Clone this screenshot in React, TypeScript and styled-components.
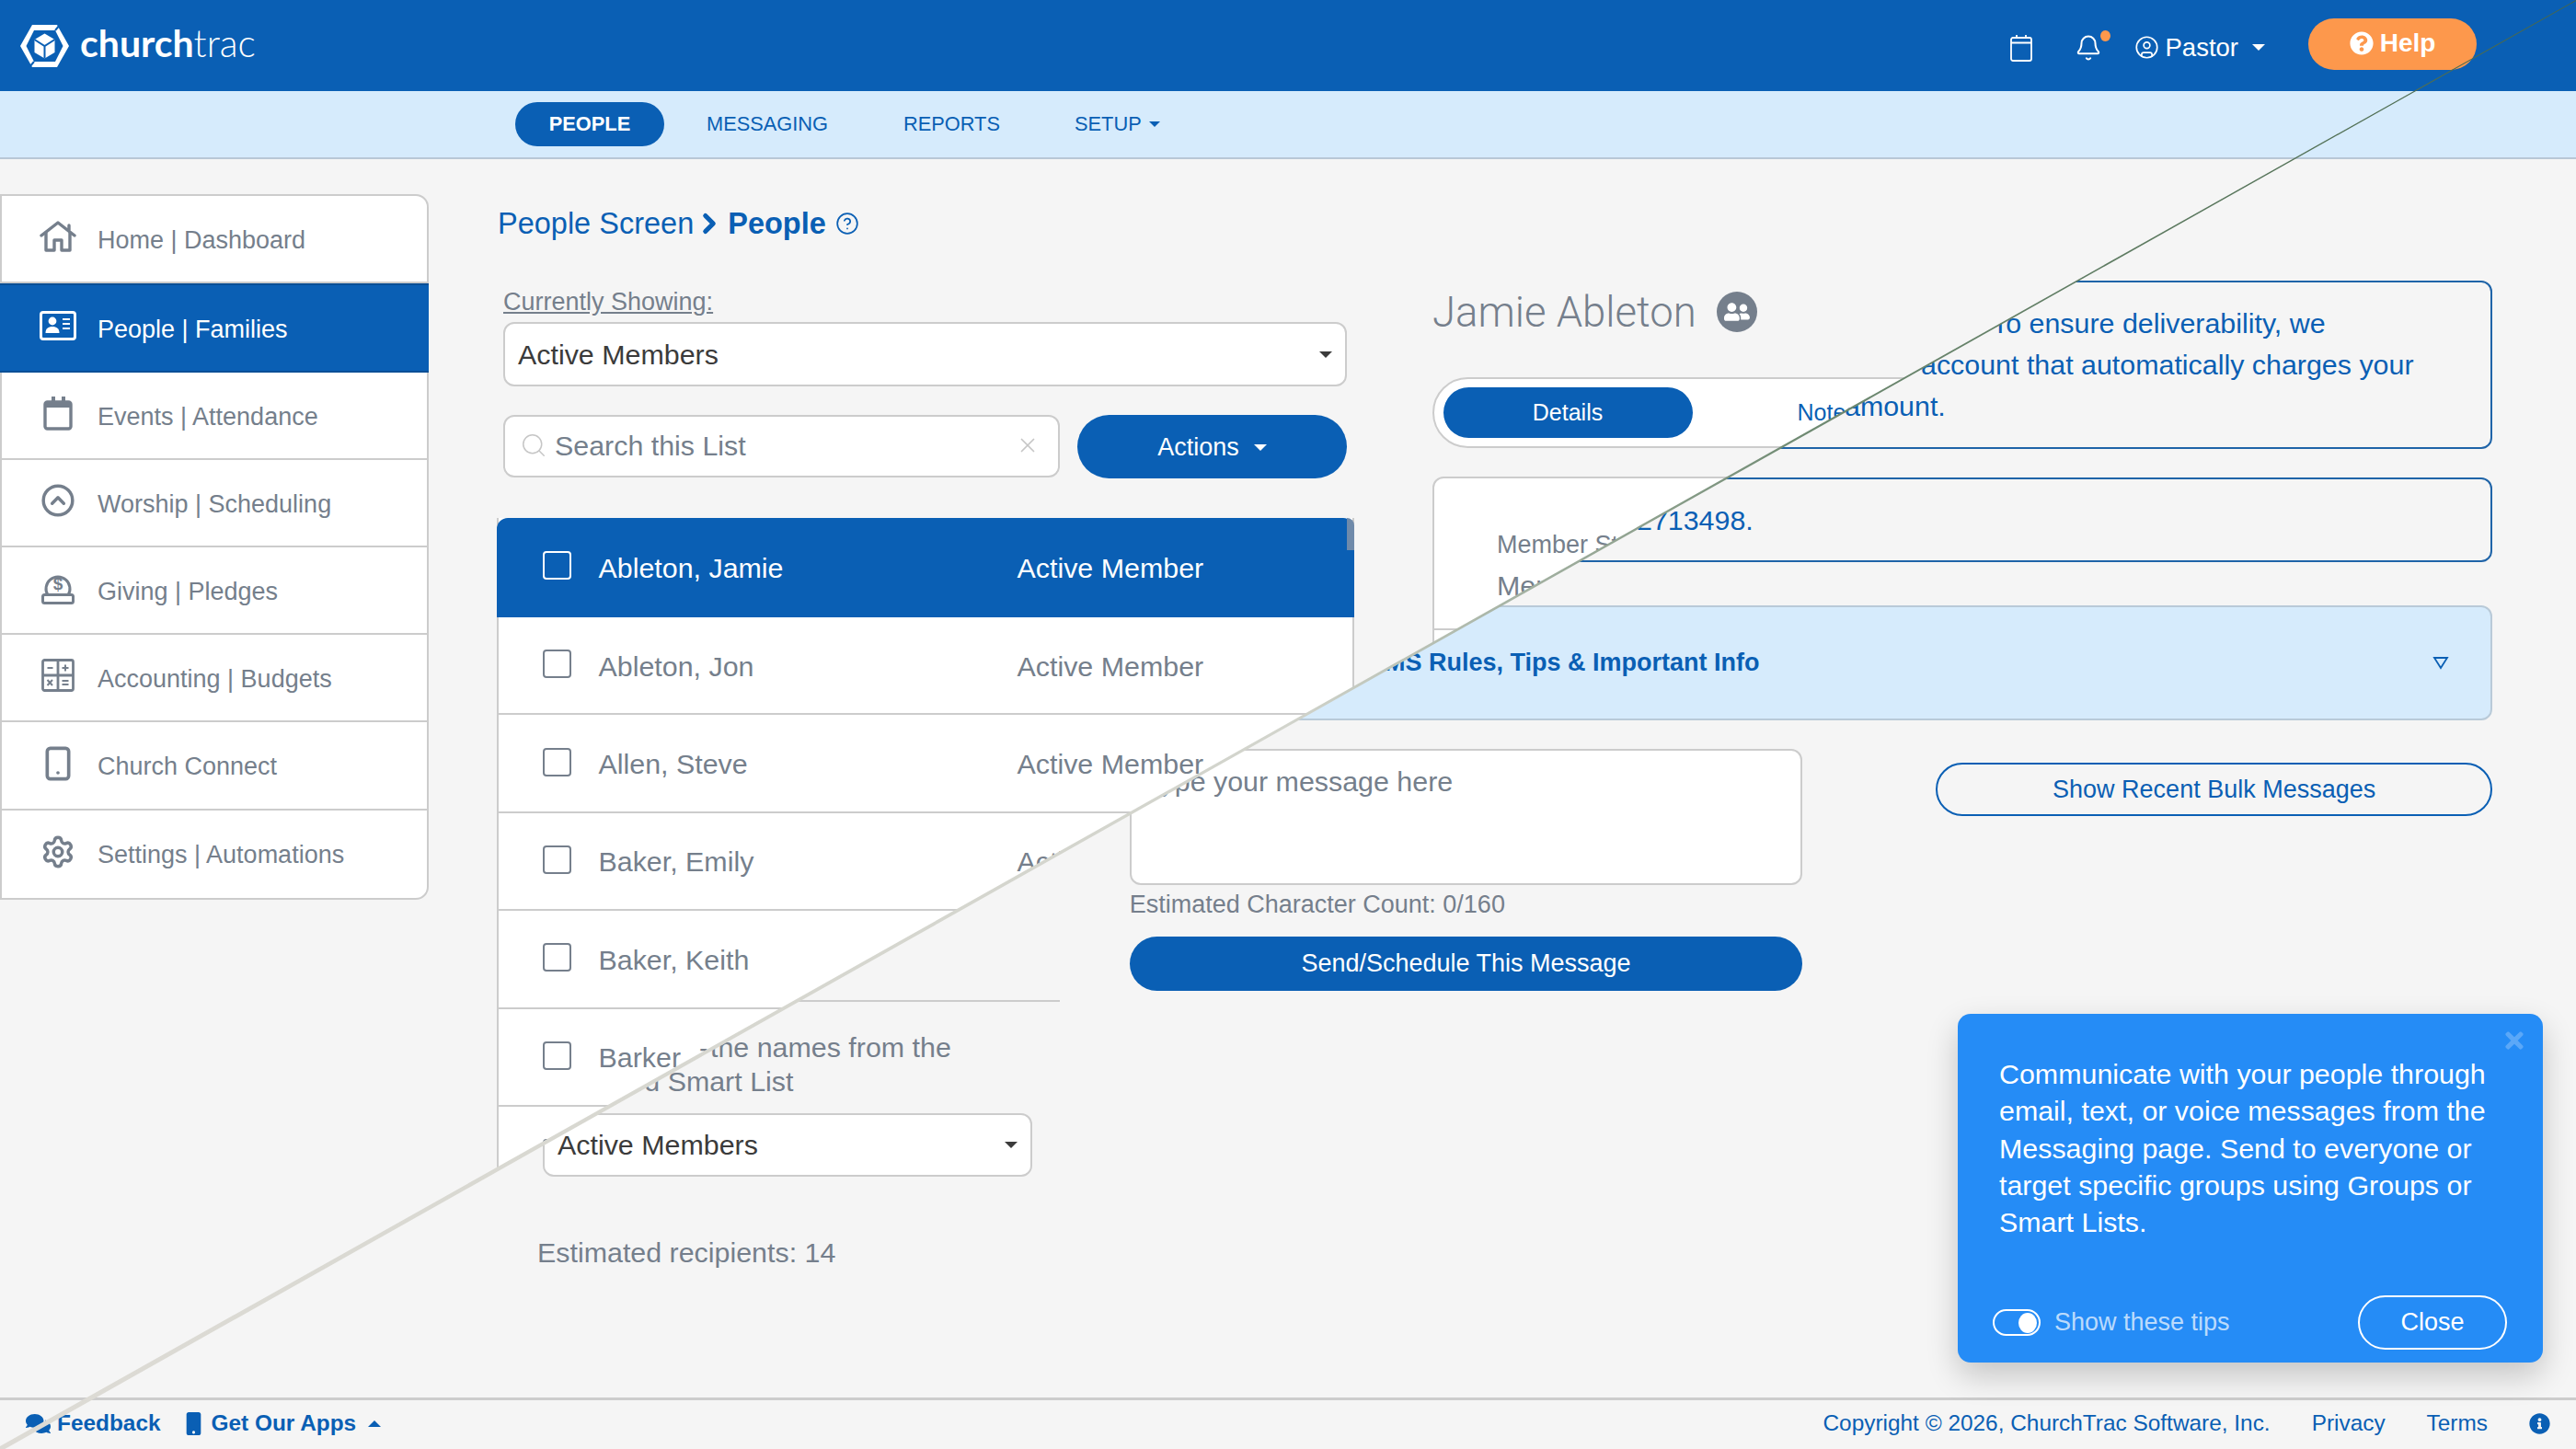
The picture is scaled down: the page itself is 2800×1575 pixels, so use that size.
import React from "react"
import styled, { createGlobalStyle } from "styled-components"
import { Bell, CircleHelp, CircleUser, ChevronRight, CircleChevronUp, Search, Settings, Smartphone, X } from "lucide-react"
import { FaComments, FaInfoCircle, FaMobile, FaQuestionCircle, FaTimes, FaUserFriends } from "react-icons/fa"

const BLUE = "#0a5fb4"
const PALE = "#d6ebfc"
const PAGE = "#f5f5f5"
const GRAY = "#757f8c"
const LINE = "#cccccc"

const GlobalStyle = createGlobalStyle`
  html, body {
    margin: 0;
    padding: 0;
    background: ${PAGE};
  }
  * {
    box-sizing: border-box;
  }
  body {
    font-family: "Liberation Sans", Arial, sans-serif;
    color: ${GRAY};
  }
`

const Screen = styled.div`
  position: relative;
  width: 2800px;
  height: 1575px;
  overflow: hidden;
  display: flex;
  flex-direction: column;
`

/* top bar */
const TopBar = styled.header`
  flex-shrink: 0;
  height: 99px;
  background: ${BLUE};
  display: flex;
  align-items: center;
  padding: 0 108px 0 22px;
  color: #ffffff;
`
const LogoWord = styled.div`
  margin-left: 12px;
  font-family: Lato, sans-serif;
  font-size: 41px;
  line-height: 46px;
  font-weight: 700;
  color: #ffffff;
  padding-bottom: 6px;
  span {
    font-weight: 300;
  }
`
const TopTools = styled.div`
  margin-left: auto;
  display: flex;
  align-items: center;
`
const UserTools = styled.div`
  display: flex;
  align-items: center;
  margin-top: 4px;
`
const CalendarGlyph = styled.svg`
  width: 26px;
  height: 30px;
  margin-right: 45px;
`
const BellWrap = styled.div`
  position: relative;
  width: 30px;
  height: 30px;
  margin-right: 35px;
`
const BellDot = styled.span`
  position: absolute;
  top: -4px;
  right: -9px;
  width: 11px;
  height: 12px;
  border-radius: 50%;
  background: #fd984c;
`
const UserName = styled.span`
  margin-left: 7px;
  font-size: 27.5px;
  line-height: 32px;
`
const Caret = styled.span<{ $size?: number; $color?: string; $up?: boolean }>`
  display: inline-block;
  width: 0;
  height: 0;
  border-left: ${({ $size }) => $size || 7}px solid transparent;
  border-right: ${({ $size }) => $size || 7}px solid transparent;
  ${({ $up, $size, $color }) =>
    `${$up ? "border-bottom" : "border-top"}: ${$size || 7}px solid ${$color || "#ffffff"};`}
`
const PastorCaret = styled(Caret)`
  margin-left: 15px;
  margin-right: 47px;
`
const HelpButton = styled.div`
  width: 183px;
  height: 56px;
  margin-bottom: 3px;
  border-radius: 28px;
  background: #fd984c;
  display: flex;
  align-items: center;
  justify-content: center;
  gap: 7px;
  font-size: 28px;
  font-weight: 700;
  color: #ffffff;
  padding-bottom: 2px;
`

/* section tabs */
const SubNav = styled.nav`
  flex-shrink: 0;
  height: 74px;
  background: ${PALE};
  border-bottom: 2px solid #b9c7d6;
  display: flex;
  align-items: center;
  padding: 0 0 0 560px;
`
const NavItem = styled.div<{ $active?: boolean; $width?: number }>`
  display: flex;
  align-items: center;
  justify-content: ${({ $active }) => ($active ? "center" : "flex-start")};
  gap: 8px;
  width: ${({ $width }) => $width}px;
  height: 48px;
  border-radius: 24px;
  font-size: 21.8px;
  font-weight: ${({ $active }) => ($active ? 700 : 400)};
  color: ${({ $active }) => ($active ? "#ffffff" : BLUE)};
  background: ${({ $active }) => ($active ? BLUE : "transparent")};
`

/* the two pages, split by the diagonal wipe */
const Stage = styled.main`
  position: relative;
  flex: 1;
`
const Layer = styled.div<{ $side: "people" | "messaging" }>`
  position: absolute;
  inset: 0;
  background: ${PAGE};
  clip-path: ${({ $side }) =>
    $side === "people"
      ? "polygon(0 0, 2492.4px 0, 99.6px 100%, 0 100%)"
      : "polygon(2492.4px 0, 100% 0, 100% 100%, 99.6px 100%)"};
`
const WipeLine = styled.svg`
  position: absolute;
  inset: 0;
  width: 2800px;
  height: 1575px;
  pointer-events: none;
`

/* people page */
const PeopleLayout = styled.div`
  display: flex;
  align-items: flex-start;
  padding-top: 38px;
`
const SideMenu = styled.aside`
  width: 466px;
  background: #ffffff;
  border: 2px solid ${LINE};
  border-radius: 0 14px 14px 0;
`
const SideItem = styled.div<{ $active?: boolean }>`
  height: ${({ $active }) => ($active ? 97 : 95.1)}px;
  display: flex;
  align-items: center;
  padding: 3px 0 0 38px;
  font-size: 27px;
  color: ${({ $active }) => ($active ? "#ffffff" : GRAY)};
  background: ${({ $active }) => ($active ? BLUE : "transparent")};
  border-bottom: 2px solid ${({ $active }) => ($active ? "#0a4f96" : LINE)};
  ${({ $active }) => $active && "border-top: 2px solid #0a4f96; margin: 0 -2px; padding-left: 40px;"}
  &:last-child {
    border-bottom: none;
  }
`
const SideIcon = styled.span`
  width: 46px;
  height: 40px;
  margin-right: 20px;
  margin-bottom: 8px;
  display: flex;
  align-items: center;
  justify-content: center;
`
const PeopleColumn = styled.section`
  width: 931px;
  margin-left: 75px;
`
const Breadcrumb = styled.div`
  height: 64px;
  display: flex;
  align-items: center;
  font-size: 32.5px;
  color: ${BLUE};
  b {
    font-weight: 700;
    margin-left: 3px;
    margin-right: 10px;
  }
`
const Filters = styled.div`
  padding: 36px 8px 0 6px;
`
const ShowingLabel = styled.div`
  font-size: 27px;
  line-height: 34px;
  text-decoration: underline;
  margin-bottom: 5px;
`
const SelectBox = styled.div<{ $compact?: boolean }>`
  height: ${({ $compact }) => ($compact ? 69 : 70)}px;
  background: #ffffff;
  border: 2px solid ${LINE};
  border-radius: 12px;
  display: flex;
  align-items: center;
  justify-content: space-between;
  padding: 0 14px 0 14px;
  font-size: 30.4px;
  color: #3b3b3b;
`
const FilterRow = styled.div`
  display: flex;
  justify-content: space-between;
  margin-top: 31px;
`
const SearchBox = styled.div`
  width: 605px;
  height: 68px;
  background: #ffffff;
  border: 2px solid ${LINE};
  border-radius: 12px;
  display: flex;
  align-items: center;
  padding: 0 20px 2px 16px;
  font-size: 30.4px;
  color: ${GRAY};
  span {
    margin-left: 8px;
    flex: 1;
  }
`
const ActionsButton = styled.div`
  width: 293px;
  height: 69px;
  border-radius: 35px;
  background: ${BLUE};
  color: #ffffff;
  font-size: 27px;
  display: flex;
  align-items: center;
  justify-content: center;
  gap: 16px;
  padding-top: 1px;
`
const MemberList = styled.div`
  position: relative;
  margin: 43px 0 0 -1.5px;
  border-left: 2px solid ${LINE};
  border-right: 2px solid ${LINE};
  background: #ffffff;
`
const ScrollStub = styled.div`
  position: absolute;
  top: 0;
  right: -2px;
  width: 8px;
  height: 35px;
  background: #6f8aaa;
  border-top-right-radius: 8px;
`
const MemberRow = styled.div<{ $active?: boolean }>`
  height: ${({ $active }) => ($active ? 108 : 106.4)}px;
  display: flex;
  align-items: center;
  padding: 2px 0 0 48px;
  font-size: 30.4px;
  color: ${({ $active }) => ($active ? "#ffffff" : GRAY)};
  background: ${({ $active }) => ($active ? BLUE : "transparent")};
  border-bottom: 2px solid ${({ $active }) => ($active ? BLUE : LINE)};
  ${({ $active }) =>
    $active && `margin: 0 -2px; padding-left: 50px; border-radius: 12px 12px 0 0;`}
`
const CheckBox = styled.span`
  flex-shrink: 0;
  width: 31px;
  height: 31px;
  margin-right: 30px;
  margin-bottom: 5px;
  border: 2.5px solid currentColor;
  border-radius: 4px;
`
const MemberName = styled.span`
  width: 455px;
`
const DetailColumn = styled.section`
  width: 1150px;
  margin-left: 85px;
  padding-top: 78px;
`
const PersonName = styled.div`
  height: 100px;
  display: flex;
  align-items: center;
  gap: 22px;
  font-family: Roboto, sans-serif;
  font-weight: 300;
  font-size: 45.5px;
  color: ${GRAY};
`
const FamilyBadge = styled.span`
  width: 44px;
  height: 44px;
  border-radius: 50%;
  background: ${GRAY};
  color: #ffffff;
  display: flex;
  align-items: center;
  justify-content: center;
`
const DetailTabs = styled.div`
  margin-top: 21px;
  height: 77px;
  background: #ffffff;
  border: 2px solid ${LINE};
  border-radius: 39px;
  display: flex;
  align-items: center;
  padding-left: 9.5px;
  font-size: 25px;
`
const DetailTab = styled.div<{ $active?: boolean }>`
  width: ${({ $active }) => ($active ? "271px" : "auto")};
  height: 55px;
  margin-left: ${({ $active }) => ($active ? 0 : 114)}px;
  border-radius: 28px;
  display: flex;
  align-items: center;
  justify-content: center;
  color: ${({ $active }) => ($active ? "#ffffff" : BLUE)};
  background: ${({ $active }) => ($active ? BLUE : "transparent")};
`
const DetailPanel = styled.div`
  margin-top: 31px;
  height: 560px;
  background: #ffffff;
  border: 2px solid ${LINE};
  border-radius: 12px 12px 0 0;
  padding-top: 54px;
`
const DetailLine = styled.div<{ $large?: boolean }>`
  padding-left: 68px;
  font-size: ${({ $large }) => ($large ? 30.4 : 27)}px;
  line-height: 36px;
  margin-bottom: 8px;
`
const DetailRule = styled.div`
  margin-top: 29px;
  border-top: 2px solid ${LINE};
`

/* messaging page */
const MessagingLayout = styled.div`
  padding: 132px 91px 0 540px;
`
const Notice = styled.div<{ $height: number }>`
  margin-left: 688px;
  height: ${({ $height }) => $height}px;
  border: 2.5px solid #1f64a8;
  border-radius: 12px;
  color: ${BLUE};
  font-size: 30.4px;
  line-height: 45px;
  display: flex;
  flex-direction: column;
  justify-content: center;
  & + & {
    margin-top: 31px;
  }
`
const NoticeLine = styled.div<{ $indent: number }>`
  padding-left: ${({ $indent }) => $indent}px;
`
const RulesBar = styled.div`
  margin: 47px 0 0 688px;
  height: 125px;
  background: ${PALE};
  border: 2px solid #b9cad8;
  border-radius: 12px;
  display: flex;
  align-items: center;
  justify-content: space-between;
  padding: 0 45px 0 257px;
  font-size: 27px;
  font-weight: 700;
  color: ${BLUE};
`
const Composer = styled.div`
  margin-top: 31px;
  display: flex;
  align-items: flex-start;
`
const RecipientColumn = styled.div`
  width: 612px;
  margin-right: 76px;
`
const RecipientRule = styled.div`
  height: 275px;
  border-bottom: 2px solid ${LINE};
`
const RecipientHint = styled.div`
  margin-top: 31px;
  font-size: 30.4px;
  line-height: 37px;
`
const HintLine = styled.div<{ $indent: number }>`
  padding-left: ${({ $indent }) => $indent}px;
`
const RecipientSelect = styled.div`
  width: 532px;
  margin: 16px 0 0 50px;
`
const RecipientCount = styled.div`
  margin: 64px 0 0 44px;
  font-size: 30.4px;
  line-height: 36px;
`
const MessageColumn = styled.div`
  width: 732px;
  margin-right: 145px;
`
const MessageBox = styled.div`
  height: 148px;
  background: #ffffff;
  border: 2px solid ${LINE};
  border-radius: 12px;
  padding: 15px 15px;
  font-size: 30.4px;
  line-height: 36px;
`
const CharCount = styled.div`
  margin-top: 5px;
  font-size: 27px;
  line-height: 32px;
`
const SendButton = styled.div`
  margin-top: 19px;
  height: 59px;
  border-radius: 30px;
  background: ${BLUE};
  color: #ffffff;
  font-size: 27px;
  display: flex;
  align-items: center;
  justify-content: center;
`
const RecentButton = styled.div`
  width: 605px;
  height: 58px;
  margin-top: 15px;
  border: 2px solid ${BLUE};
  border-radius: 29px;
  color: ${BLUE};
  font-size: 27px;
  display: flex;
  align-items: center;
  justify-content: center;
`

/* footer */
const Footer = styled.footer`
  flex-shrink: 0;
  height: 56px;
  border-top: 3px solid ${LINE};
  background: ${PAGE};
  display: flex;
  align-items: center;
  padding: 0 28px 3px 28px;
  font-size: 24.4px;
  color: ${BLUE};
`
const FooterStrong = styled.div`
  display: flex;
  align-items: center;
  font-weight: 700;
  gap: 7px;
  margin-right: 23px;
`
const FooterCaret = styled(Caret)`
  margin-left: 6px;
`
const FooterRight = styled.div`
  margin-left: auto;
  display: flex;
  align-items: center;
  gap: 45px;
`

/* tip card */
const TipCard = styled.aside`
  position: absolute;
  top: 1102px;
  right: 36px;
  width: 636px;
  height: 379px;
  border-radius: 14px;
  background: #258cf6;
  box-shadow: 0 14px 34px rgba(0, 0, 0, 0.2);
  display: flex;
  flex-direction: column;
  color: #ffffff;
`
const TipClose = styled.span`
  position: absolute;
  top: 15px;
  right: 17px;
  color: #5ba8f8;
  display: flex;
`
const TipText = styled.p`
  margin: 0;
  padding: 45px 30px 0 45px;
  font-size: 30.4px;
  line-height: 40.3px;
`
const TipFoot = styled.div`
  margin-top: auto;
  padding: 0 39px 14px 38px;
  display: flex;
  align-items: center;
`
const TipToggle = styled.span`
  width: 52px;
  height: 29px;
  border: 2px solid #ffffff;
  border-radius: 15px;
  display: flex;
  align-items: center;
  justify-content: flex-end;
  padding-right: 2px;
  &::after {
    content: "";
    width: 20px;
    height: 22px;
    border-radius: 50%;
    background: #ffffff;
  }
`
const TipLabel = styled.span`
  margin-left: 15px;
  font-size: 27px;
  color: rgba(255, 255, 255, 0.7);
`
const TipButton = styled.div`
  margin-left: auto;
  width: 162px;
  height: 59px;
  border: 2px solid #ffffff;
  border-radius: 30px;
  font-size: 27px;
  display: flex;
  align-items: center;
  justify-content: center;
`

const Logo = () => (
  <svg width="53" height="46" viewBox="0 0 53 46">
    <polygon points="13,0 40,0 53,23 40,46 13,46 0,23" fill="#fff" />
    <polygon points="15,6 38,6 46.5,23 38,40 15,40 6.5,23" fill={BLUE} />
    <polygon points="26.5,9.5 37.5,16 37.5,30 26.5,36.5 15.5,30 15.5,16" fill="#fff" />
    <path d="M15.5 16l11 7 11-7M26.5 23v13.5M38 6l5-6M15 40l-5 6" stroke={BLUE} strokeWidth="2" fill="none" />
  </svg>
)

const HomeIcon = () => (
  <svg width="40" height="34" viewBox="0 0 40 34" fill="none" stroke="currentColor" strokeWidth="3.4" strokeLinejoin="round" strokeLinecap="round">
    <path d="M2 16L20 2l18 14M32 10V5" />
    <path d="M7 13v19h9V21h8v11h9V13" />
  </svg>
)
const CardIcon = () => (
  <svg width="40" height="32" viewBox="0 0 40 32" fill="none">
    <rect x="1.5" y="1.5" width="37" height="29" rx="2.5" stroke="currentColor" strokeWidth="3" />
    <circle cx="14" cy="11" r="4.4" fill="currentColor" />
    <path d="M6.5 24c0-5 3-7 7.5-7s7.5 2 7.5 7z" fill="currentColor" />
    <path d="M25 9h8M25 14h8M25 19h8" stroke="currentColor" strokeWidth="2.2" />
  </svg>
)
const EventIcon = () => (
  <svg width="32" height="37" viewBox="0 0 32 37" fill="none">
    <rect x="2" y="6" width="28" height="29" rx="2.5" stroke="currentColor" strokeWidth="3.4" />
    <path d="M2 6h28v6H2z" fill="currentColor" />
    <path d="M9 0h4v7H9zM20 0h4v7h-4z" fill="currentColor" />
  </svg>
)
const GivingIcon = () => (
  <svg width="36" height="36" viewBox="0 0 36 36" fill="none" stroke="currentColor" strokeWidth="3">
    <path d="M7 26a13 13 0 1 1 22 0" />
    <rect x="1.5" y="25.5" width="33" height="9" rx="2" />
    <path d="M8 25.5h20" />
    <text x="18" y="20" fontFamily="Liberation Sans" fontSize="19" fontWeight="700" fill="currentColor" stroke="none" textAnchor="middle">$</text>
  </svg>
)
const LedgerIcon = () => (
  <svg width="36" height="36" viewBox="0 0 36 36" fill="none" stroke="currentColor" strokeWidth="2.8">
    <rect x="1.5" y="1.5" width="33" height="33" rx="2" />
    <path d="M18 1.5v33M1.5 18h33" />
    <path d="M6.5 10h6M22.5 10h7M26 6.5v7M6.5 23l5.5 6M12 23l-5.5 6M22.5 24h7M22.5 28h7" strokeWidth="2" />
  </svg>
)

type MemberEntry = { name: string; status: string; active?: boolean }
const members: MemberEntry[] = [
  { name: "Ableton, Jamie", status: "Active Member", active: true },
  { name: "Ableton, Jon", status: "Active Member" },
  { name: "Allen, Steve", status: "Active Member" },
  { name: "Baker, Emily", status: "Active Member" },
  { name: "Baker, Keith", status: "" },
  { name: "Barker, Jason", status: "" },
  { name: "", status: "" },
]

const menu = [
  { label: "Home | Dashboard", icon: <HomeIcon /> },
  { label: "People | Families", icon: <CardIcon />, active: true },
  { label: "Events | Attendance", icon: <EventIcon /> },
  { label: "Worship | Scheduling", icon: <CircleChevronUp size={38} strokeWidth={2.2} /> },
  { label: "Giving | Pledges", icon: <GivingIcon /> },
  { label: "Accounting | Budgets", icon: <LedgerIcon /> },
  { label: "Church Connect", icon: <Smartphone size={40} strokeWidth={2.2} /> },
  { label: "Settings | Automations", icon: <Settings size={38} strokeWidth={2.2} /> },
]

const PeoplePage = () => (
  <PeopleLayout>
    <SideMenu>
      {menu.map((item) => (
        <SideItem key={item.label} $active={item.active}>
          <SideIcon>{item.icon}</SideIcon>
          {item.label}
        </SideItem>
      ))}
    </SideMenu>
    <PeopleColumn>
      <Breadcrumb>
        People Screen
        <ChevronRight size={34} strokeWidth={3.6} />
        <b>People</b>
        <CircleHelp size={26} strokeWidth={1.6} />
      </Breadcrumb>
      <Filters>
        <ShowingLabel>Currently Showing:</ShowingLabel>
        <SelectBox>
          Active Members
          <Caret $size={7} $color="#3b3b3b" />
        </SelectBox>
        <FilterRow>
          <SearchBox>
            <Search size={30} strokeWidth={1.2} color="#c6c6c6" />
            <span>Search this List</span>
            <X size={26} strokeWidth={1.6} color="#c6c6c6" />
          </SearchBox>
          <ActionsButton>
            Actions
            <Caret $size={7} />
          </ActionsButton>
        </FilterRow>
      </Filters>
      <MemberList>
        {members.map((member, index) => (
          <MemberRow key={index} $active={member.active}>
            <CheckBox />
            <MemberName>{member.name}</MemberName>
            {member.status}
          </MemberRow>
        ))}
        <ScrollStub />
      </MemberList>
    </PeopleColumn>
    <DetailColumn>
      <PersonName>
        Jamie Ableton
        <FamilyBadge>
          <FaUserFriends size={28} />
        </FamilyBadge>
      </PersonName>
      <DetailTabs>
        <DetailTab $active>Details</DetailTab>
        <DetailTab>Notes</DetailTab>
      </DetailTabs>
      <DetailPanel>
        <DetailLine>Member Status</DetailLine>
        <DetailLine $large>Member</DetailLine>
        <DetailRule />
      </DetailPanel>
    </DetailColumn>
  </PeopleLayout>
)

const MessagingPage = () => (
  <MessagingLayout>
    <Notice $height={183}>
      <NoticeLine $indent={935}>To ensure deliverability, we</NoticeLine>
      <NoticeLine $indent={858}>account that automatically charges your</NoticeLine>
      <NoticeLine $indent={775}>amount.</NoticeLine>
    </Notice>
    <Notice $height={92}>
      <NoticeLine $indent={549}>2713498.</NoticeLine>
    </Notice>
    <RulesBar>
      SMS Rules, Tips &amp; Important Info
      <svg width="18" height="15" viewBox="0 0 18 15">
        <path d="M2 2h14l-7 11z" fill="none" stroke={BLUE} strokeWidth="1.8" />
      </svg>
    </RulesBar>
    <Composer>
      <RecipientColumn>
        <RecipientRule />
        <RecipientHint>
          <HintLine $indent={232}>the names from the</HintLine>
          <HintLine $indent={64}>selected Smart List</HintLine>
        </RecipientHint>
        <RecipientSelect>
          <SelectBox $compact>
            Active Members
            <Caret $size={7} $color="#3b3b3b" />
          </SelectBox>
        </RecipientSelect>
        <RecipientCount>Estimated recipients: 14</RecipientCount>
      </RecipientColumn>
      <MessageColumn>
        <MessageBox>Type your message here</MessageBox>
        <CharCount>Estimated Character Count: 0/160</CharCount>
        <SendButton>Send/Schedule This Message</SendButton>
      </MessageColumn>
      <RecentButton>Show Recent Bulk Messages</RecentButton>
    </Composer>
  </MessagingLayout>
)

export default function App() {
  return (
    <>
      <GlobalStyle />
      <Screen>
        <TopBar>
          <Logo />
          <LogoWord>
            church<span>trac</span>
          </LogoWord>
          <TopTools>
            <UserTools>
              <CalendarGlyph viewBox="0 0 26 30" fill="none" stroke="#fff" strokeWidth="1.8">
                <rect x="2" y="4" width="22" height="25" rx="2" />
                <path d="M2 9.5h22M8 1v4M18 1v4" />
              </CalendarGlyph>
              <BellWrap>
                <Bell size={30} strokeWidth={1.6} />
                <BellDot />
              </BellWrap>
              <CircleUser size={27} strokeWidth={1.5} />
              <UserName>Pastor</UserName>
              <PastorCaret $size={7} />
            </UserTools>
            <HelpButton>
              <FaQuestionCircle size={26} />
              Help
            </HelpButton>
          </TopTools>
        </TopBar>
        <SubNav>
          <NavItem $active $width={162}>PEOPLE</NavItem>
          <NavItem $width={46} />
          <NavItem $width={214}>MESSAGING</NavItem>
          <NavItem $width={186}>REPORTS</NavItem>
          <NavItem $width={110}>
            SETUP
            <Caret $size={6} $color={BLUE} />
          </NavItem>
        </SubNav>
        <Stage>
          <Layer $side="people">
            <PeoplePage />
          </Layer>
          <Layer $side="messaging">
            <MessagingPage />
          </Layer>
        </Stage>
        <Footer>
          <FooterStrong>
            <FaComments size={27} />
            Feedback
          </FooterStrong>
          <FooterStrong>
            <FaMobile size={25} />
            Get Our Apps
            <FooterCaret $up $size={7} $color={BLUE} />
          </FooterStrong>
          <FooterRight>
            <span>Copyright © 2026, ChurchTrac Software, Inc.</span>
            <span>Privacy</span>
            <span>Terms</span>
            <FaInfoCircle size={23} />
          </FooterRight>
        </Footer>
        <WipeLine viewBox="0 0 2800 1575">
          <defs>
            <linearGradient id="wipe" x1="1" y1="0" x2="0" y2="1">
              <stop offset="0" stopColor="#46664a" />
              <stop offset="0.3" stopColor="#6f8a72" />
              <stop offset="0.5" stopColor="#d2d4cc" />
              <stop offset="1" stopColor="#dddbd5" />
            </linearGradient>
          </defs>
          <polygon points="2800,0 2800,1 0,1578 0,1572" fill="url(#wipe)" />
        </WipeLine>
        <TipCard>
          <TipClose>
            <FaTimes size={28} />
          </TipClose>
          <TipText>
            Communicate with your people through email, text, or voice messages from the Messaging page. Send to everyone or target specific groups using Groups or Smart Lists.
          </TipText>
          <TipFoot>
            <TipToggle />
            <TipLabel>Show these tips</TipLabel>
            <TipButton>Close</TipButton>
          </TipFoot>
        </TipCard>
      </Screen>
    </>
  )
}
